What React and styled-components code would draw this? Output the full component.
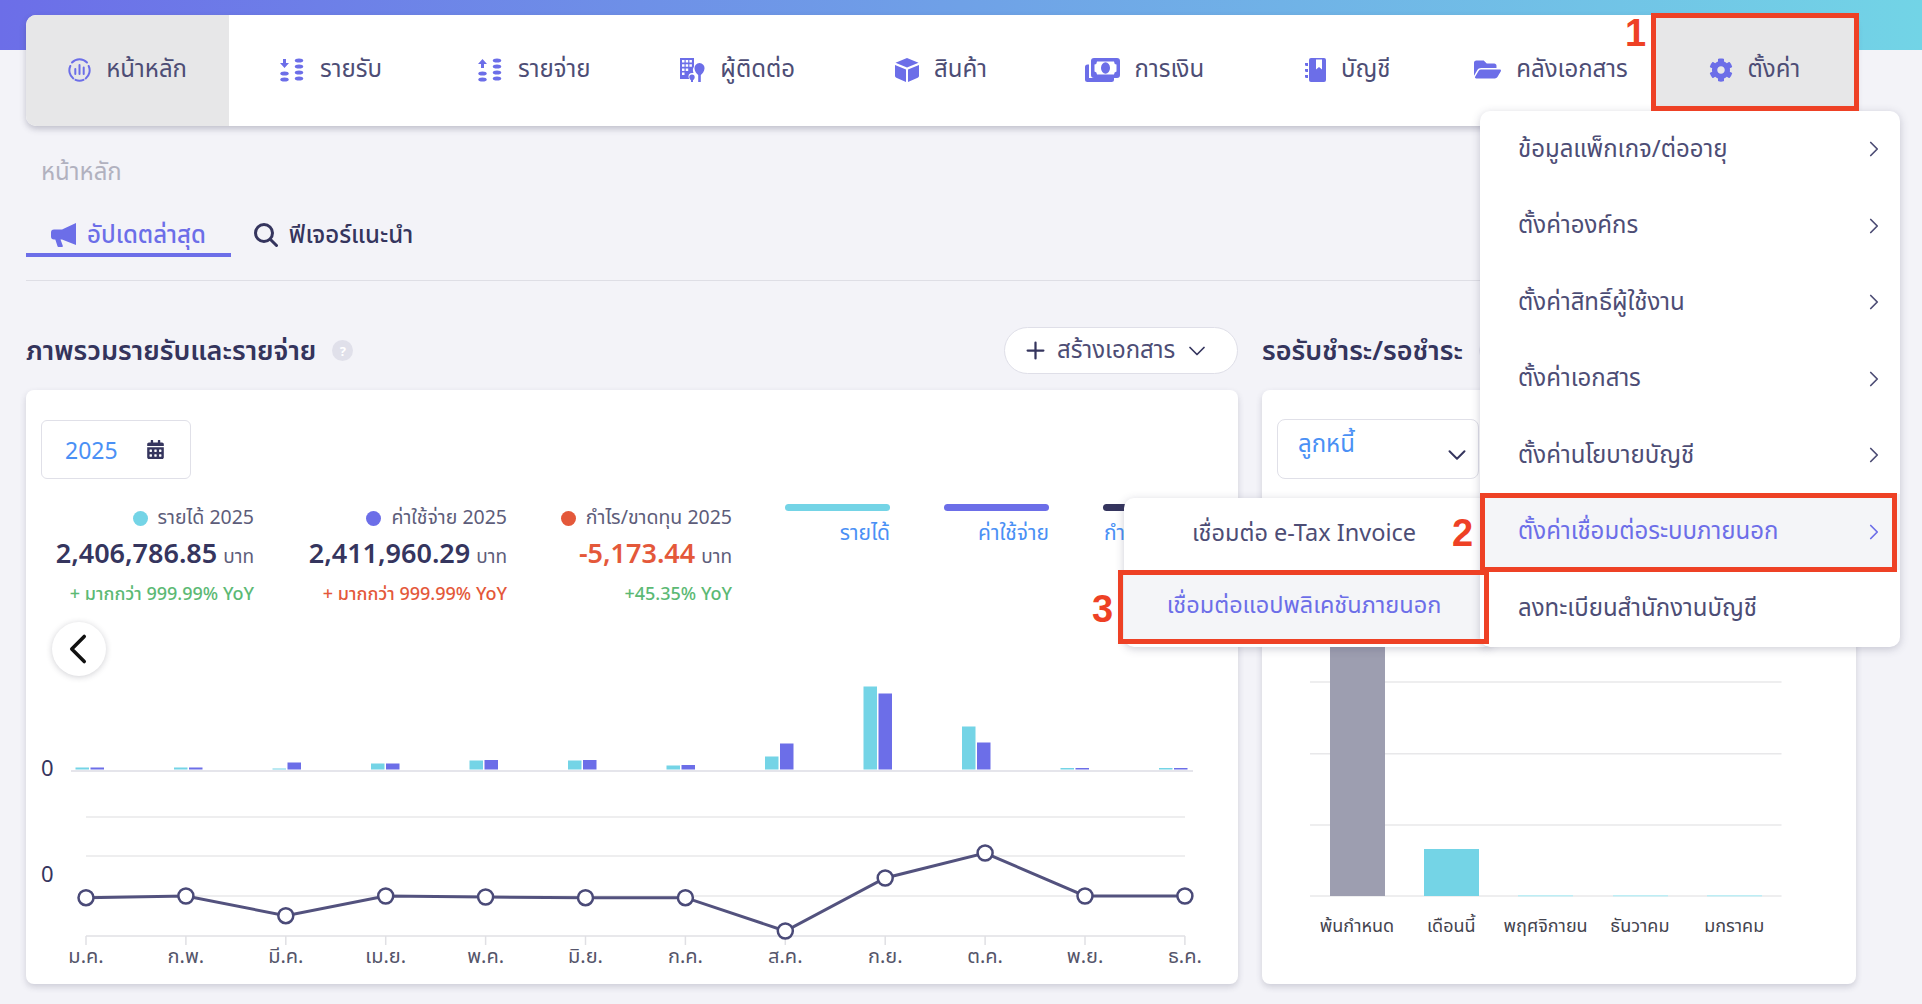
import React from "react";
import styled, { createGlobalStyle } from "styled-components";
import { FaFolderOpen, FaCog, FaCalendarAlt } from "react-icons/fa";
import { ChevronRight, ChevronLeft, ChevronDown, Plus } from "lucide-react";

const GlobalStyle = createGlobalStyle`
  html, body {
    margin: 0;
    padding: 0;
    height: 100%;
    overflow: hidden;
    background: #f3f3f8;
    font-family: "Noto Sans", "Noto Sans Thai", "Open Sans", sans-serif;
    color: #4b4b73;
  }
`;

const Page = styled.div`
  position: relative;
  width: 1922px;
  height: 1004px;
  overflow: hidden;
`;

const TopBand = styled.div`
  height: 50px;
  background: linear-gradient(90deg, #6c6ee8 0%, #72d4e6 100%);
`;

const Main = styled.main`
  padding: 0 66px 0 26px;
`;

const Nav = styled.nav`
  display: grid;
  grid-template-columns: repeat(9, 1fr);
  height: 111px;
  margin-top: -35px;
  background: #fff;
  border-radius: 10px;
  box-shadow: 0 3px 6px rgba(60, 60, 90, 0.28);
  overflow: hidden;
`;

const NavItem = styled.div`
  display: flex;
  align-items: center;
  justify-content: center;
  gap: 15px;
  padding-bottom: 2px;
  font-size: 24px;
  color: #4d4d75;
  background: ${(p) => (p.$active ? "#e7e7e8" : "transparent")};
  svg {
    color: #6c6ee8;
    flex: none;
  }
`;

const Breadcrumb = styled.div`
  margin: 29px 0 0 15px;
  height: 32px;
  line-height: 32px;
  font-size: 24px;
  color: #b1b1bf;
`;

const Tabs = styled.div`
  display: flex;
  height: 50px;
  margin-top: 20px;
  border-bottom: 1px solid #dedee5;
  padding-bottom: 23px;
`;

const Tab = styled.div`
  display: flex;
  align-items: center;
  justify-content: center;
  gap: 11px;
  width: ${(p) => p.$w}px;
  box-sizing: border-box;
  padding-top: 10px;
  font-size: 24px;
  font-weight: 500;
  color: ${(p) => (p.$active ? "#6c6ee8" : "#35355e")};
  border-bottom: 4px solid ${(p) => (p.$active ? "#6c6ee8" : "transparent")};
`;

const Columns = styled.div`
  display: grid;
  grid-template-columns: 1212px 594px;
  column-gap: 24px;
`;

const SectionHead = styled.div`
  display: flex;
  align-items: center;
  box-sizing: border-box;
  height: 109px;
  padding: 46px 0 16px;
  gap: 16px;
`;

const SectionTitle = styled.h2`
  margin: 0;
  padding-top: 2px;
  font-size: 27px;
  font-weight: 600;
  color: #34345c;
`;

const Help = styled.span`
  display: flex;
  align-items: center;
  justify-content: center;
  width: 21px;
  height: 21px;
  border-radius: 50%;
  background: #e0e0ea;
  color: #fff;
  font-size: 13px;
  font-weight: 700;
`;

const CreateButton = styled.div`
  display: flex;
  align-items: center;
  gap: 8px;
  margin-left: auto;
  box-sizing: border-box;
  width: 234px;
  height: 47px;
  padding: 0 6px 0 17px;
  background: #fff;
  border: 1px solid #dfdfe8;
  border-radius: 24px;
  font-size: 24px;
  color: #4d4d75;
  svg {
    flex: none;
    color: #35355e;
  }
`;

const Card = styled.section`
  position: relative;
  height: 594px;
  background: #fff;
  border-radius: 8px;
  box-shadow: 0 3px 6px rgba(60, 60, 90, 0.2);
  overflow: hidden;
`;

const CardHead = styled.div`
  box-sizing: border-box;
  height: 250px;
  padding: 30px 15px 0;
`;

const Picker = styled.div`
  display: flex;
  align-items: center;
  justify-content: space-between;
  box-sizing: border-box;
  width: 150px;
  height: 59px;
  padding: 0 25px 0 23px;
  border: 1px solid #e0e0e8;
  border-radius: 6px;
  font-size: 23px;
  color: #4a90f5;
  svg {
    color: #35355e;
  }
`;

const StatsRow = styled.div`
  display: flex;
  margin-top: 24px;
`;

const Stat = styled.div`
  width: ${(p) => p.$w}px;
  display: flex;
  flex-direction: column;
  align-items: flex-end;
`;

const StatLabel = styled.div`
  display: flex;
  align-items: center;
  gap: 10px;
  height: 30px;
  font-size: 19.5px;
  color: #5d5d7a;
`;

const Dot = styled.span`
  width: 15px;
  height: 15px;
  border-radius: 50%;
  background: ${(p) => p.$color};
`;

const StatValue = styled.div`
  display: flex;
  align-items: baseline;
  gap: 6px;
  height: 40px;
  line-height: 40px;
  font-size: 27px;
  font-weight: 600;
  color: ${(p) => p.$color || "#35355e"};
  small {
    font-size: 19px;
    font-weight: 400;
    color: #5d5d7a;
  }
`;

const StatNote = styled.div`
  margin-top: 6px;
  height: 28px;
  line-height: 28px;
  font-size: 18px;
  font-weight: 500;
  color: ${(p) => p.$color};
`;

const Legend = styled.div`
  display: flex;
  gap: 54px;
  margin: 1px 0 0 53px;
`;

const LegendItem = styled.div`
  width: 105px;
  display: flex;
  flex-direction: column;
  align-items: flex-end;
  gap: 7px;
  font-size: 21px;
  color: #4a90f5;
  white-space: nowrap;
  &::before {
    content: "";
    align-self: stretch;
    height: 7px;
    border-radius: 4px;
    background: ${(p) => p.$color};
  }
`;

const PrevButton = styled.div`
  position: absolute;
  left: 26px;
  top: 232px;
  display: flex;
  align-items: center;
  justify-content: center;
  width: 54px;
  height: 54px;
  border-radius: 50%;
  background: #fff;
  box-shadow: 0 1px 6px rgba(40, 40, 60, 0.22);
  color: #111;
  svg {
    margin-right: 3px;
  }
`;

const ChartSvg = styled.svg`
  display: block;
  font-family: "Noto Sans", "Noto Sans Thai", sans-serif;
`;

const SelectBox = styled.div`
  display: flex;
  justify-content: space-between;
  box-sizing: border-box;
  width: 202px;
  height: 60px;
  padding: 6px 6px 0 20px;
  margin-top: -1px;
  border: 1px solid #e0e0e8;
  border-radius: 8px;
  font-size: 24px;
  color: #4a90f5;
  svg {
    margin-top: 14px;
    color: #35355e;
  }
`;

const Menu = styled.div`
  position: absolute;
  left: 1480px;
  top: 111px;
  z-index: 3;
  width: 420px;
  background: #fff;
  border-radius: 10px;
  box-shadow: 0 2px 8px rgba(60, 60, 90, 0.25);
  overflow: hidden;
`;

const MenuRow = styled.div`
  display: flex;
  align-items: center;
  justify-content: space-between;
  height: 76.5px;
  padding: 0 13px 0 38px;
  font-size: 24px;
  color: ${(p) => (p.$active ? "#6c6ee8" : "#4d4d75")};
  background: ${(p) => (p.$active ? "#f4f5f8" : "transparent")};
`;

const SubMenu = styled.div`
  position: absolute;
  left: 1124px;
  top: 498px;
  z-index: 2;
  width: 370px;
  height: 149px;
  background: #fff;
  border-radius: 10px;
  box-shadow: 0 2px 8px rgba(60, 60, 90, 0.25);
  overflow: hidden;
`;

const SubRow = styled.div`
  display: flex;
  align-items: center;
  justify-content: center;
  width: 360px;
  height: 72px;
  font-size: 23.5px;
  color: ${(p) => (p.$active ? "#6c6ee8" : "#4d4d75")};
  background: ${(p) => (p.$active ? "#f4f5f8" : "transparent")};
`;

const RedBox = styled.div`
  position: absolute;
  z-index: 4;
  left: ${(p) => p.$x}px;
  top: ${(p) => p.$y}px;
  width: ${(p) => p.$w}px;
  height: ${(p) => p.$h}px;
  box-sizing: border-box;
  border: 5px solid #ee4125;
`;

const StepNumber = styled.div`
  position: absolute;
  z-index: 4;
  left: ${(p) => p.$x}px;
  top: ${(p) => p.$y}px;
  font-family: "Liberation Sans", sans-serif;
  font-size: 38px;
  line-height: 38px;
  font-weight: 700;
  color: #ee4125;
`;

const Blue = "#6c6ee8";

const DashboardIcon = () => (
  <svg width="23" height="24" viewBox="0 0 23 24" fill="none" stroke={Blue} strokeWidth="2" strokeLinecap="round">
    <path d="M4 4.500A10.400 10.400 0 0 1 19 4.500" />
    <path d="M20.700 8a10.400 10.400 0 0 1-3 12.500M5.300 20.500A10.400 10.400 0 0 1 2.300 8" />
    <path d="M7.500 21.800a10.400 10.400 0 0 0 8 0" />
    <path d="M7.300 11v5M11.500 7v9M15.700 9.500v6.500" />
  </svg>
);

const coin = (x, y) => <ellipse key={x + "-" + y} cx={x} cy={y} rx="4.200" ry="2.100" fill={Blue} />;

const CoinsIcon = ({ up }) => (
  <svg width="25" height="24" viewBox="0 0 25 24">
    {up ? (
      <path d="M4.500 1 9 6H6v4H3V6H0z" fill={Blue} />
    ) : (
      <path d="M3 1h3v4h3l-4.500 5L0 5h3z" fill={Blue} />
    )}
    {coin(4.500, 15.500)}
    {coin(4.500, 21.500)}
    {coin(19, 2.500)}
    {coin(19, 8.500)}
    {coin(19, 14.500)}
    {coin(19, 20.500)}
  </svg>
);

const ContactIcon = () => (
  <svg width="25" height="24" viewBox="0 0 25 24" fill={Blue}>
    <path
      fillRule="evenodd"
      d="M0 0h14v8.500a6 6 0 0 0-1 4.500 6 6 0 0 0 .500 2H12a3.500 3.500 0 0 0-3.500 3.500c0 1 .3 1.700.7 2.500H0zM2 2v2.500h2.500V2zm3.700 0v2.500h2.500V2zm3.700 0v2.500h2.500V2zM2 6.200v2.500h2.500V6.200zm3.700 0v2.500h2.500V6.200zm3.700 0v2.500h2.500V6.200zM2 10.400v2.500h2.500v-2.500zm3.700 0v2.500h2.500v-2.500zM2 14.600v2.500h2.500v-2.500z"
    />
    <path d="M19.500 5a5 5 0 0 1 5 5.500c0 2.500-2 5-3.700 6.500v7h-2.600v-7c-1.700-1.500-3.700-4-3.700-6.500a5 5 0 0 1 5-5.500z" />
    <path d="M12 16.500a2.700 2.700 0 0 1 2.700 2.700c0 1.300-1 2.300-1.700 3V24h-2v-1.800c-.7-.700-1.700-1.700-1.700-3a2.700 2.700 0 0 1 2.700-2.700z" />
  </svg>
);

const CubeIcon = () => (
  <svg width="24" height="24" viewBox="0 0 24 24" fill={Blue}>
    <path d="M12 0 23.500 4.800 12 9.600.5 4.800z" />
    <path d="M0 7 11 11.600V24L1.300 19.800A2 2 0 0 1 0 18z" />
    <path d="M24 7 13 11.600V24l9.700-4.200A2 2 0 0 0 24 18z" />
  </svg>
);

const MoneyIcon = () => (
  <svg width="35" height="24" viewBox="0 0 35 24" fill={Blue}>
    <path d="M0 9a2.500 2.500 0 0 1 2.500-2.500H4V20h25v1.500a2.500 2.500 0 0 1-2.500 2.500h-24A2.500 2.500 0 0 1 0 21.500z" />
    <path
      fillRule="evenodd"
      d="M9 0h23a3 3 0 0 1 3 3v14a3 3 0 0 1-3 3H9a3 3 0 0 1-3-3V3a3 3 0 0 1 3-3zm3 3.500A3 3 0 0 1 9.500 6.500v7a3 3 0 0 1 2.500 3h17a3 3 0 0 1 2.500-3v-7a3 3 0 0 1-2.500-3z"
    />
    <ellipse cx="20.500" cy="10" rx="4.500" ry="5.800" />
  </svg>
);

const BookIcon = () => (
  <svg width="21" height="24" viewBox="0 0 21 24" fill={Blue}>
    <path
      fillRule="evenodd"
      d="M4 2a2 2 0 0 1 2-2h13a2 2 0 0 1 2 2v20a2 2 0 0 1-2 2H6a2 2 0 0 1-2-2zM11 1.500v10l3-2.500 3 2.500v-10z"
    />
    <path d="M0 5h3v3H1.300A1.300 1.300 0 0 1 0 6.700zM0 11h3v3H1.300A1.300 1.300 0 0 1 0 12.700zM0 17h3v3H1.300A1.300 1.300 0 0 1 0 18.700z" />
  </svg>
);

const MegaphoneIcon = () => (
  <svg width="25" height="24" viewBox="0 0 25 24" fill={Blue}>
    <path d="M25 0v22L11 16.500H9.500l2.200 6a1 1 0 0 1-1 1.400H7.500a1 1 0 0 1-1-.7L4.300 16.500H3a3 3 0 0 1-3-3v-4a3 3 0 0 1 3-3h8z" />
  </svg>
);

const SearchIcon = () => (
  <svg width="24" height="24" viewBox="0 0 24 24" fill="none" stroke="#35355e" strokeWidth="3" strokeLinecap="round">
    <circle cx="10" cy="10" r="8.500" />
    <path d="M16.500 16.500 22.500 22.500" />
  </svg>
);

const navItems = [
  { label: "หน้าหลัก", icon: <DashboardIcon />, active: true },
  { label: "รายรับ", icon: <CoinsIcon /> },
  { label: "รายจ่าย", icon: <CoinsIcon up /> },
  { label: "ผู้ติดต่อ", icon: <ContactIcon /> },
  { label: "สินค้า", icon: <CubeIcon /> },
  { label: "การเงิน", icon: <MoneyIcon /> },
  { label: "บัญชี", icon: <BookIcon /> },
  { label: "คลังเอกสาร", icon: <FaFolderOpen size={27} /> },
  { label: "ตั้งค่า", icon: <FaCog size={24} />, active: true },
];

const menuItems = [
  "ข้อมูลแพ็กเกจ/ต่ออายุ",
  "ตั้งค่าองค์กร",
  "ตั้งค่าสิทธิ์ผู้ใช้งาน",
  "ตั้งค่าเอกสาร",
  "ตั้งค่านโยบายบัญชี",
  "ตั้งค่าเชื่อมต่อระบบภายนอก",
  "ลงทะเบียนสำนักงานบัญชี",
];

const months = ["ม.ค.", "ก.พ.", "มี.ค.", "เม.ย.", "พ.ค.", "มิ.ย.", "ก.ค.", "ส.ค.", "ก.ย.", "ต.ค.", "พ.ย.", "ธ.ค."];
const barHeights = [
  [2, 2], [2, 2], [1, 7], [6, 6], [9, 9.500], [9, 9.500],
  [4, 4.500], [13, 26], [83, 76], [43, 27], [1.500, 1.500], [1.500, 1.500],
];
const lineY = [897.700, 896, 915.700, 896, 897, 897.700, 897.700, 931, 878, 853, 896, 896];
const lineX = months.map((_, i) => 86 + i * 99.900);

const MainChart = () => (
  <ChartSvg width="1212" height="344" viewBox="26 640 1212 344">
    <text x="41" y="776" fontSize="22" fill="#35355e">0</text>
    {barHeights.map(([a, b], i) => {
      const c = 90 + i * 98.500;
      return (
        <g key={i}>
          <rect x={c - 14.500} y={769.500 - a} width="13.500" height={a} fill="#74d4e6" />
          <rect x={c + 0.500} y={769.500 - b} width="13.500" height={b} fill={Blue} />
        </g>
      );
    })}
    <line x1="71" x2="1193" y1="771" y2="771" stroke="#dcdce4" strokeWidth="1.500" />
    <text x="41" y="882" fontSize="22" fill="#35355e">0</text>
    {[817, 856, 896].map((y) => (
      <line key={y} x1="86" x2="1185" y1={y} y2={y} stroke="#e8e8ea" strokeWidth="1.500" />
    ))}
    <line x1="86" x2="1185" y1="936" y2="936" stroke="#e0e0e4" strokeWidth="1.500" />
    {lineX.map((x, i) => (
      <g key={i}>
        <line x1={x} x2={x} y1="936" y2="945" stroke="#e0e0e4" strokeWidth="1.500" />
        <text x={x} y="963" fontSize="20" fill="#55556a" textAnchor="middle">{months[i]}</text>
      </g>
    ))}
    <polyline
      points={lineX.map((x, i) => `${x},${lineY[i]}`).join(" ")}
      fill="none"
      stroke="#53527e"
      strokeWidth="3"
    />
    {lineX.map((x, i) => (
      <circle key={i} cx={x} cy={lineY[i]} r="7.500" fill="#fff" stroke="#4a4a78" strokeWidth="2.500" />
    ))}
  </ChartSvg>
);

const dueLabels = ["พ้นกำหนด", "เดือนนี้", "พฤศจิกายน", "ธันวาคม", "มกราคม"];

const DueChart = () => (
  <ChartSvg width="594" height="344" viewBox="1262 640 594 344">
    {[682, 753.700, 825, 896].map((y) => (
      <line key={y} x1="1310" x2="1781.500" y1={y} y2={y} stroke="#e8e8ea" strokeWidth="1.500" />
    ))}
    <rect x="1330" y="600" width="55" height="296" fill="#9d9eb0" />
    <rect x="1424" y="849" width="55" height="47" fill="#74d4e6" />
    {[1518, 1613, 1707].map((x) => (
      <rect key={x} x={x} y="895" width="55" height="1.500" fill="#bdeef5" />
    ))}
    {dueLabels.map((t, i) => (
      <text key={t} x={1357 + i * 94.300} y="932" fontSize="18" fill="#44444f" textAnchor="middle">{t}</text>
    ))}
  </ChartSvg>
);

export default function App() {
  return (
    <Page>
      <GlobalStyle />
      <TopBand />
      <Main>
        <Nav>
          {navItems.map((item) => (
            <NavItem key={item.label} $active={item.active}>
              {item.icon}
              <span>{item.label}</span>
            </NavItem>
          ))}
        </Nav>
        <Breadcrumb>หน้าหลัก</Breadcrumb>
        <Tabs>
          <Tab $w={205} $active>
            <MegaphoneIcon />
            อัปเดตล่าสุด
          </Tab>
          <Tab $w={205}>
            <SearchIcon />
            ฟีเจอร์แนะนำ
          </Tab>
        </Tabs>
        <Columns>
          <div>
            <SectionHead>
              <SectionTitle>ภาพรวมรายรับและรายจ่าย</SectionTitle>
              <Help>?</Help>
              <CreateButton>
                <Plus size={27} strokeWidth={2} />
                สร้างเอกสาร
                <ChevronDown size={28} strokeWidth={1.500} />
              </CreateButton>
            </SectionHead>
            <Card>
              <CardHead>
                <Picker>
                  2025
                  <FaCalendarAlt size={19} />
                </Picker>
                <StatsRow>
                  <Stat $w={213}>
                    <StatLabel><Dot $color="#74d4e6" />รายได้ 2025</StatLabel>
                    <StatValue>2,406,786.85 <small>บาท</small></StatValue>
                    <StatNote $color="#5cb974">+ มากกว่า 999.99% YoY</StatNote>
                  </Stat>
                  <Stat $w={253}>
                    <StatLabel><Dot $color={Blue} />ค่าใช้จ่าย 2025</StatLabel>
                    <StatValue>2,411,960.29 <small>บาท</small></StatValue>
                    <StatNote $color="#e4583a">+ มากกว่า 999.99% YoY</StatNote>
                  </Stat>
                  <Stat $w={225}>
                    <StatLabel><Dot $color="#e4583a" />กำไร/ขาดทุน 2025</StatLabel>
                    <StatValue $color="#e4583a">-5,173.44 <small>บาท</small></StatValue>
                    <StatNote $color="#5cb974">+45.35% YoY</StatNote>
                  </Stat>
                  <Legend>
                    <LegendItem $color="#74d4e6">รายได้</LegendItem>
                    <LegendItem $color={Blue}>ค่าใช้จ่าย</LegendItem>
                    <LegendItem $color="#35355e">กำไร/ขาดทุน</LegendItem>
                  </Legend>
                </StatsRow>
              </CardHead>
              <PrevButton><ChevronLeft size={50} strokeWidth={1.700} /></PrevButton>
              <MainChart />
            </Card>
          </div>
          <div>
            <SectionHead>
              <SectionTitle>รอรับชำระ/รอชำระ</SectionTitle>
              <Help>?</Help>
            </SectionHead>
            <Card>
              <CardHead>
                <SelectBox>
                  ลูกหนี้
                  <ChevronDown size={30} strokeWidth={1.600} />
                </SelectBox>
              </CardHead>
              <DueChart />
            </Card>
          </div>
        </Columns>
      </Main>

      <SubMenu>
        <SubRow>เชื่อมต่อ e-Tax Invoice</SubRow>
        <SubRow $active>เชื่อมต่อแอปพลิเคชันภายนอก</SubRow>
      </SubMenu>
      <Menu>
        {menuItems.map((t, i) => (
          <MenuRow key={t} $active={i === 5}>
            {t}
            {i < 6 && <ChevronRight size={26} strokeWidth={1.600} />}
          </MenuRow>
        ))}
      </Menu>

      <RedBox $x={1651} $y={13} $w={208} $h={98} />
      <RedBox $x={1480} $y={493} $w={417} $h={79} />
      <RedBox $x={1118} $y={570} $w={371} $h={74} />
      <StepNumber $x={1625} $y={14}>1</StepNumber>
      <StepNumber $x={1452} $y={514}>2</StepNumber>
      <StepNumber $x={1092} $y={590}>3</StepNumber>
    </Page>
  );
}
